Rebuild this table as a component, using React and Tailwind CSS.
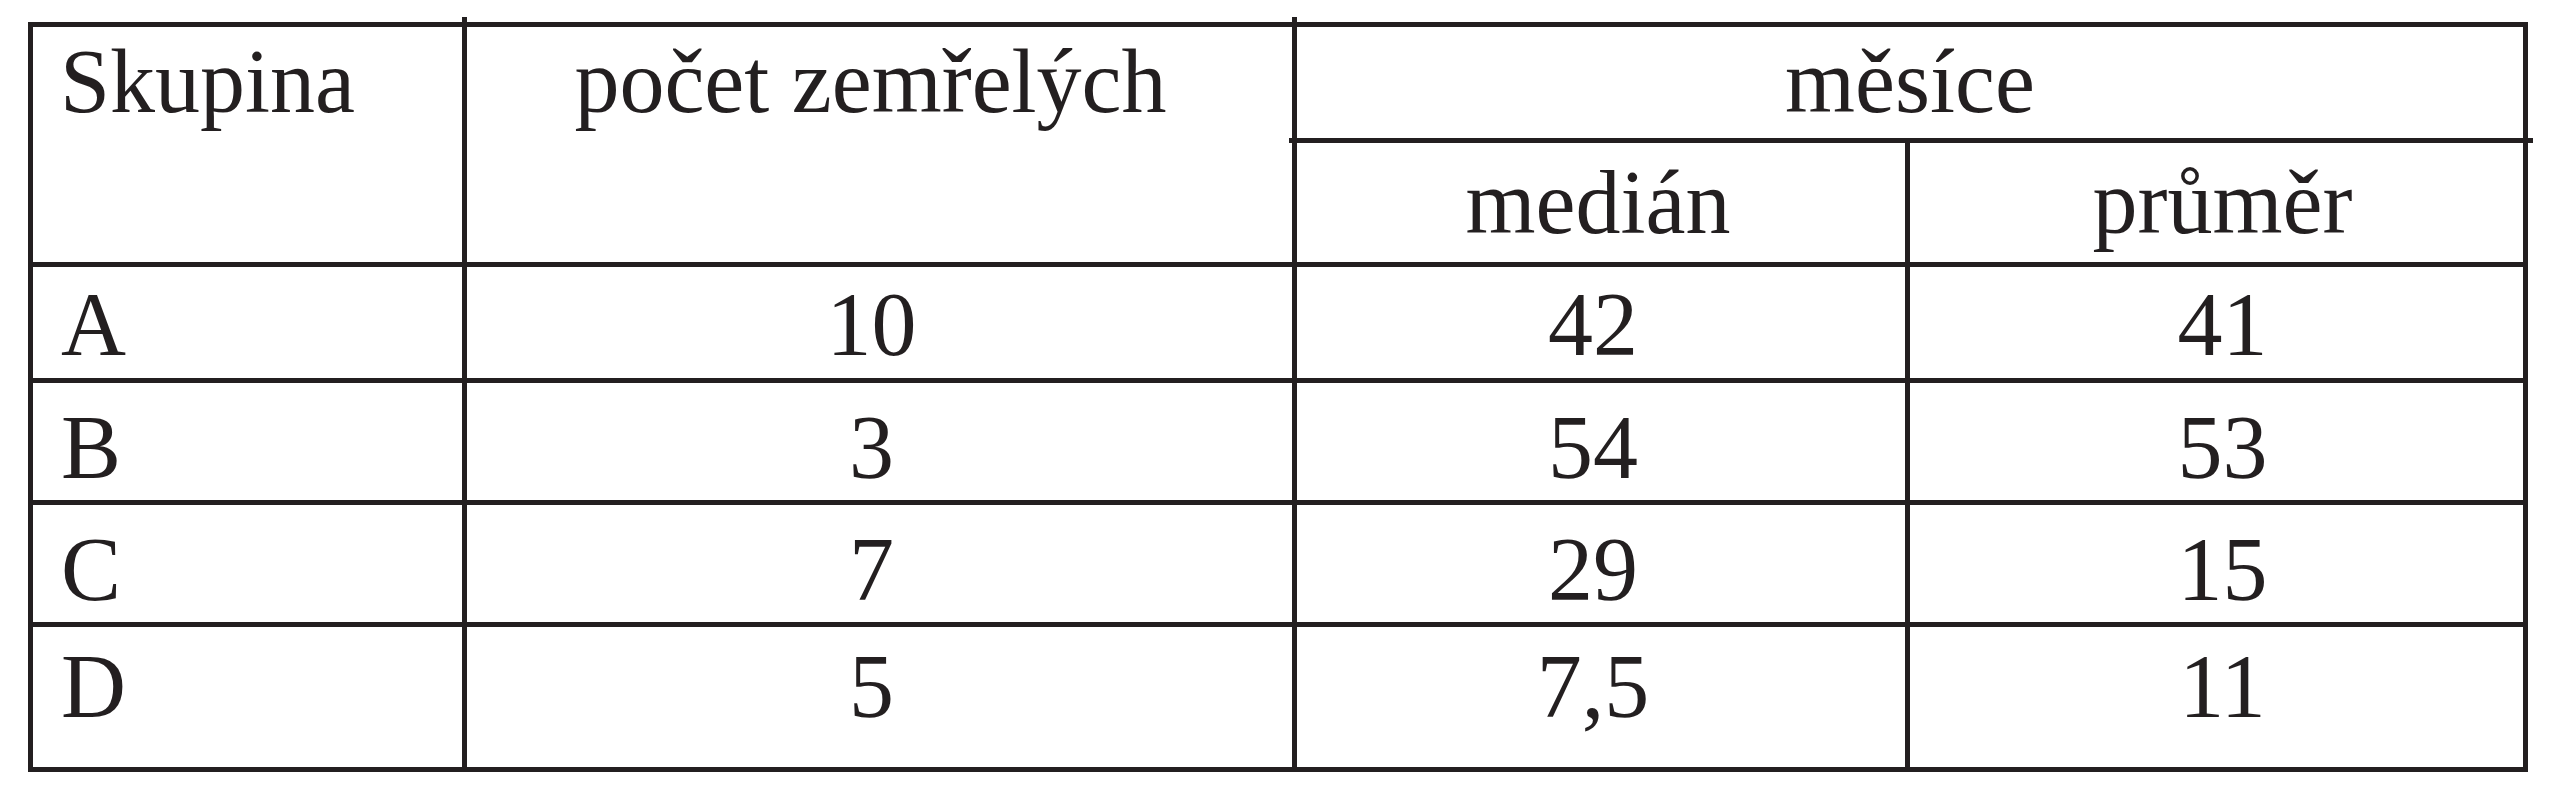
import React from 'react';

const rows = [
  { label: 'A', count: '10', median: '42', mean: '41', pad: 'pt-[13px]' },
  { label: 'B', count: '3', median: '54', mean: '53', pad: 'pt-[20px]' },
  { label: 'C', count: '7', median: '29', mean: '15', pad: 'pt-[20px]' },
  { label: 'D', count: '5', median: '7,5', mean: '11', pad: 'pt-[15px]' },
];

const App = () => {
  return (
    <div className="h-[800px] w-[2556px] bg-white pl-[28px] pt-[22px] overflow-hidden">
      <div
        className="relative grid w-max bg-[#231f20] p-[5px] gap-[5px] grid-cols-[429px_825px_608px_613px] grid-rows-[111px_119px_111px_117px_117px_140px] text-[90px] leading-none text-[#231f20]"
        style={{ fontFamily: '"Liberation Serif", "Times New Roman", serif' }}
      >
        {/* header */}
        <div className="row-span-2 bg-white pt-[10px] pl-[27px]">Skupina</div>
        <div className="row-span-2 bg-white pt-[10px] pr-[18px] text-center">počet zemřelých</div>
        <div className="col-span-2 bg-white pt-[10px] text-center">měsíce</div>
        <div className="bg-white pt-[15px] pr-[6px] text-center">medián</div>
        <div className="bg-white pt-[15px] pl-[12px] text-center">průměr</div>

        {rows.map((row) => (
          <React.Fragment key={row.label}>
            <div className={`bg-white pl-[28px] ${row.pad}`}>{row.label}</div>
            <div className={`bg-white pr-[16px] text-center ${row.pad}`}>{row.count}</div>
            <div className={`bg-white pr-[16px] text-center ${row.pad}`}>{row.median}</div>
            <div className={`bg-white pl-[12px] text-center ${row.pad}`}>{row.mean}</div>
          </React.Fragment>
        ))}

        {/* little overshoots of the ruled lines */}
        <div className="absolute left-[434px] top-[-5px] h-[5px] w-[5px] bg-[#231f20]" />
        <div className="absolute left-[1264px] top-[-5px] h-[5px] w-[5px] bg-[#231f20]" />
        <div className="absolute left-[1261px] top-[116px] h-[5px] w-[4px] bg-[#231f20]" />
        <div className="absolute left-[2500px] top-[116px] h-[5px] w-[5px] bg-[#231f20]" />
      </div>
    </div>
  );
};

export default App;
